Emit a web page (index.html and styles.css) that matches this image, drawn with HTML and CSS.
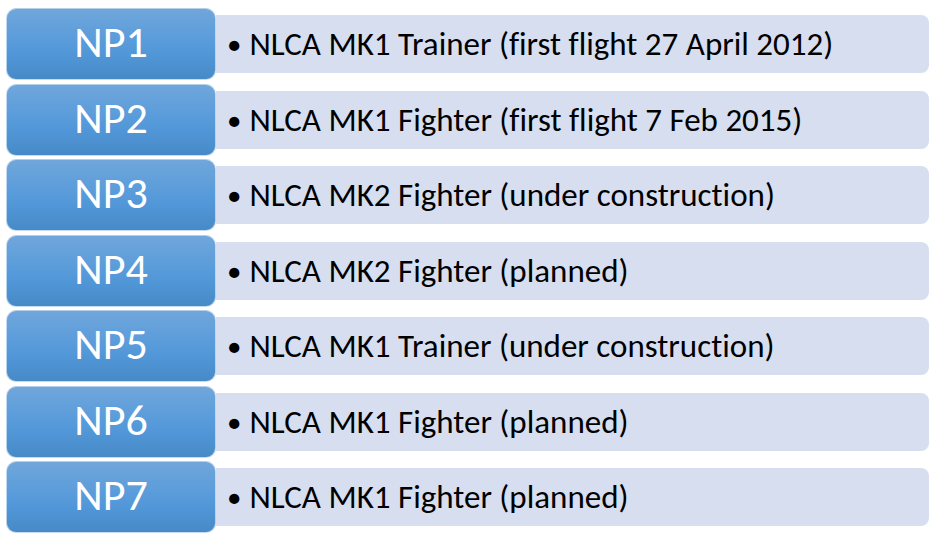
FILE: index.html
```html
<!DOCTYPE html>
<html>
<head>
<meta charset="utf-8">
<link rel="stylesheet" href="styles.css">
</head>
<body>
<div class="list">
  <div class="row"><div class="tag">NP1</div><div class="desc"><span class="bullet">•</span>NLCA MK1 Trainer (first flight 27 April 2012)</div></div>
  <div class="row"><div class="tag">NP2</div><div class="desc"><span class="bullet">•</span>NLCA MK1 Fighter (first flight 7 Feb 2015)</div></div>
  <div class="row"><div class="tag">NP3</div><div class="desc"><span class="bullet">•</span>NLCA MK2 Fighter (under construction)</div></div>
  <div class="row"><div class="tag">NP4</div><div class="desc"><span class="bullet">•</span>NLCA MK2 Fighter (planned)</div></div>
  <div class="row"><div class="tag">NP5</div><div class="desc"><span class="bullet">•</span>NLCA MK1 Trainer (under construction)</div></div>
  <div class="row"><div class="tag">NP6</div><div class="desc"><span class="bullet">•</span>NLCA MK1 Fighter (planned)</div></div>
  <div class="row"><div class="tag">NP7</div><div class="desc"><span class="bullet">•</span>NLCA MK1 Fighter (planned)</div></div>
</div>
</body>
</html>
```
FILE: styles.css
```css
html, body {
  margin: 0;
  padding: 0;
  background: #ffffff;
}
body {
  font-family: Carlito, "Open Sans", "Noto Sans", sans-serif;
  font-variant-ligatures: none;
  font-feature-settings: "liga" 0, "dlig" 0, "clig" 0;
}
.list {
  display: flex;
  flex-direction: column;
  gap: 3.5px;
  padding: 8px 0 0 6px;
}
.row {
  display: flex;
  align-items: center;
  height: 72px;
}
.tag {
  position: relative;
  z-index: 1;
  box-sizing: border-box;
  width: 210px;
  height: 72px;
  border-radius: 10px;
  border: 1px solid rgba(255,255,255,0.6);
  background: linear-gradient(to bottom, #70a6db 0%, #5a9cdb 45%, #5398d9 60%, #468ac7 100%);
  color: #ffffff;
  font-size: 44px;
  display: flex;
  align-items: center;
  justify-content: center;
  padding-bottom: 4px;
}
.desc {
  width: 713px;
  height: 58px;
  box-sizing: border-box;
  background: #d6def0;
  border-radius: 0 8px 8px 0;
  display: flex;
  align-items: center;
  padding-left: 11px;
  color: #000000;
  font-size: 33px;
  white-space: nowrap;
}
.bullet {
  font-size: 29px;
  margin-right: 8px;
}
```
